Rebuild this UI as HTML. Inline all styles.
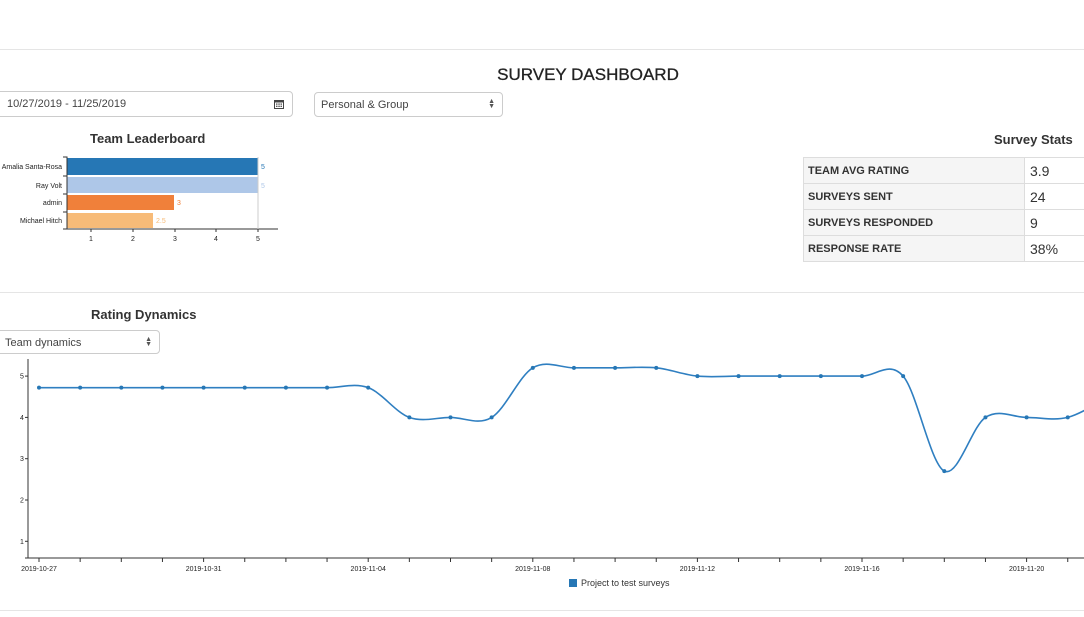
<!DOCTYPE html>
<html><head><meta charset="utf-8"><style>
body{margin:0;width:1084px;height:617px;overflow:hidden;background:#fff;font-family:"Liberation Sans",sans-serif;color:#333;position:relative}
.hr{position:absolute;left:0;width:1084px;height:1px;background:#e5e5e5}
.abs{position:absolute}
.sel{position:absolute;border:1px solid #ccc;border-radius:4px;background:#fff;font-size:11px;color:#444;box-sizing:border-box;padding-left:6px;line-height:24px}
.arr{position:absolute;right:7px;top:0;font-size:7px;line-height:5px;color:#555;padding-top:6px}
table{border-collapse:collapse;position:absolute;left:803px;top:157px;width:290px}
td{border:1px solid #ddd;height:26px;padding:0 0 0 4px;box-sizing:border-box}
td.l{background:#f5f5f5;font-size:11px;font-weight:bold;width:221px}
td.v{font-size:14px;padding-left:5px}
</style></head><body>
<div class="hr" style="top:49px"></div>
<div class="hr" style="top:292px"></div>
<div class="hr" style="top:610px"></div>
<div class="abs" style="left:0;width:1176px;top:65px;text-align:center;font-size:17px;color:#222;-webkit-text-stroke:0.3px #222">SURVEY DASHBOARD</div>
<div class="sel" style="left:-8px;top:91px;width:301px;height:26px;padding-left:14px;line-height:25px">10/27/2019 - 11/25/2019
<svg class="abs" style="right:8px;top:7px" width="10" height="10" viewBox="0 0 10 10"><rect x="0" y="1" width="10" height="9" fill="#444"/><rect x="1" y="3.5" width="8" height="5.5" fill="#fff"/><g fill="#444"><rect x="2" y="4.5" width="1.5" height="1.2"/><rect x="4.3" y="4.5" width="1.5" height="1.2"/><rect x="6.5" y="4.5" width="1.5" height="1.2"/><rect x="2" y="6.7" width="1.5" height="1.2"/><rect x="4.3" y="6.7" width="1.5" height="1.2"/><rect x="6.5" y="6.7" width="1.5" height="1.2"/></g></svg></div>
<div class="sel" style="left:314px;top:92px;width:189px;height:25px">Personal &amp; Group<div class="arr">▲<br>▼</div></div>
<div class="abs" style="left:90px;top:131px;font-size:13px;font-weight:bold;color:#333">Team Leaderboard</div>
<div class="abs" style="left:994px;top:132px;font-size:13px;font-weight:bold;color:#333">Survey Stats</div>
<svg class="abs" style="left:0;top:150px" width="300" height="100" font-family="Liberation Sans" font-size="7">
<rect x="67" y="8" width="191" height="17" fill="#2677b5"/>
<rect x="67" y="27" width="191" height="16" fill="#aec7e8"/>
<rect x="67" y="45" width="107" height="15" fill="#f0803a"/>
<rect x="67" y="63" width="86" height="15" fill="#f7bb78"/>
<text x="261" y="19" fill="#2677b5">5</text><text x="261" y="38" fill="#aec7e8">5</text><text x="177" y="55" fill="#f0803a">3</text><text x="156" y="73" fill="#f7bb78">2.5</text>
<g text-anchor="end" fill="#222"><text x="62" y="19">Amalia Santa-Rosa</text><text x="62" y="38">Ray Volt</text><text x="62" y="55">admin</text><text x="62" y="73">Michael Hitch</text></g>
<path d="M63 7H67V79H278M63 26H67M63 44H67M63 62H67M63 79H67" stroke="#333" fill="none" stroke-width="1"/>
<path d="M258 7V79" stroke="#ccc"/>
<g stroke="#333"><path d="M91 79v3M133 79v3M175 79v3M216 79v3M258 79v3"/></g>
<g text-anchor="middle" fill="#222"><text x="91" y="91">1</text><text x="133" y="91">2</text><text x="175" y="91">3</text><text x="216" y="91">4</text><text x="258" y="91">5</text></g>
</svg>
<table>
<tr><td class="l">TEAM AVG RATING</td><td class="v">3.9</td></tr>
<tr><td class="l">SURVEYS SENT</td><td class="v">24</td></tr>
<tr><td class="l">SURVEYS RESPONDED</td><td class="v">9</td></tr>
<tr><td class="l">RESPONSE RATE</td><td class="v">38%</td></tr>
</table>
<div class="abs" style="left:91px;top:307px;font-size:13px;font-weight:bold;color:#333">Rating Dynamics</div>
<div class="sel" style="left:-8px;top:330px;width:168px;height:24px;padding-left:12px;line-height:24px">Team dynamics<div class="arr">▲<br>▼</div></div>
<svg id="ch" class="abs" style="left:0;top:0" width="1084" height="617" font-family="Liberation Sans" font-size="7" fill="#222"></svg>
<div class="abs" style="left:569px;top:579px;width:8px;height:8px;background:#2677b5"></div>
<div class="abs" style="left:581px;top:578px;font-size:9px;color:#333">Project to test surveys</div>
<script>
var v=[4.72,4.72,4.72,4.72,4.72,4.72,4.72,4.72,4.72,4,4,4,5.2,5.2,5.2,5.2,5,5,5,5,5,5,2.7,4,4,4,4.5];
function X(i){return 39+i*41.15}function Y(a){return 582.6-41.3*a}
var p=v.map(function(a,i){return[X(i),Y(a)]});
var d="M"+p[0][0]+","+p[0][1];
for(var i=0;i<p.length-1;i++){var p0=p[i-1]||p[i],p1=p[i],p2=p[i+1],p3=p[i+2]||p2;
d+="C"+(p1[0]+(p2[0]-p0[0])/6)+","+(p1[1]+(p2[1]-p0[1])/6)+","+(p2[0]-(p3[0]-p1[0])/6)+","+(p2[1]-(p3[1]-p1[1])/6)+","+p2[0]+","+p2[1];}
var s='<path d="M28 359V558H1084" stroke="#333" fill="none"/>';
for(var k=1;k<=5;k++){s+='<path d="M25 '+Y(k)+'H28" stroke="#333"/><text x="20" y="'+(Y(k)+2.5)+'">'+k+'</text>';}
s+='<path d="M25 558H28" stroke="#333"/>';
var L={0:"2019-10-27",4:"2019-10-31",8:"2019-11-04",12:"2019-11-08",16:"2019-11-12",20:"2019-11-16",24:"2019-11-20"};
for(var i=0;i<27;i++){s+='<path d="M'+X(i)+' 558v4" stroke="#333"/>';if(L[i])s+='<text x="'+X(i)+'" y="571" text-anchor="middle">'+L[i]+'</text>';}
s+='<path d="'+d+'" stroke="#2f7fc1" stroke-width="1.6" fill="none"/>';
p.forEach(function(q){s+='<circle cx="'+q[0]+'" cy="'+q[1]+'" r="2" fill="#2677b5"/>'});
document.getElementById('ch').innerHTML=s;
</script>
</body></html>
